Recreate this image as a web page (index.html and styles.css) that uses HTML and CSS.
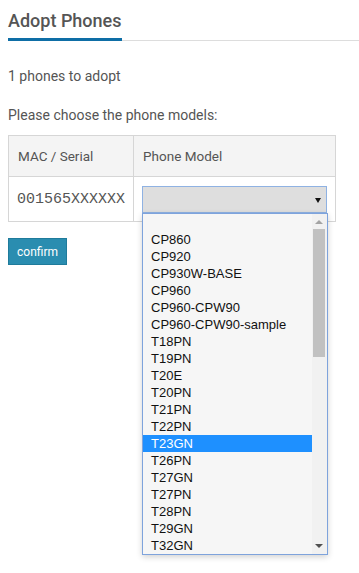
FILE: index.html
```html
<!DOCTYPE html>
<html lang="en">
<head>
    <meta charset="UTF-8">
    <meta name="viewport" content="width=device-width, initial-scale=1.0">
    <title>Adopt Phones</title>
    <link rel="stylesheet" href="styles.css">
</head>
<body>
    <div class="container">
        <h2 class="page-title"><span>Adopt Phones</span></h2>

        <p class="count">1 phones to adopt</p>
        <p class="hint">Please choose the phone models:</p>

        <table class="adopt-table">
            <thead>
                <tr>
                    <th class="col-mac">MAC / Serial</th>
                    <th>Phone Model</th>
                </tr>
            </thead>
            <tbody>
                <tr>
                    <td class="mac">001565XXXXXX</td>
                    <td>
                        <div class="select-wrap">
                            <div class="select-box"><span class="arrow"></span></div>

                            <div class="dropdown">
                                <ul class="options">
                                    <li>&nbsp;</li>
                                    <li>CP860</li>
                                    <li>CP920</li>
                                    <li>CP930W-BASE</li>
                                    <li>CP960</li>
                                    <li>CP960-CPW90</li>
                                    <li>CP960-CPW90-sample</li>
                                    <li>T18PN</li>
                                    <li>T19PN</li>
                                    <li>T20E</li>
                                    <li>T20PN</li>
                                    <li>T21PN</li>
                                    <li>T22PN</li>
                                    <li class="selected">T23GN</li>
                                    <li>T26PN</li>
                                    <li>T27GN</li>
                                    <li>T27PN</li>
                                    <li>T28PN</li>
                                    <li>T29GN</li>
                                    <li>T32GN</li>
                                </ul>
                                <div class="scrollbar">
                                    <span class="scroll-up"></span>
                                    <span class="thumb"></span>
                                    <span class="scroll-down"></span>
                                </div>
                            </div>
                        </div>
                    </td>
                </tr>
            </tbody>
        </table>

        <button class="confirm">confirm</button>
    </div>
</body>
</html>
```

FILE: styles.css
```css
html, body {
    min-height: 100vh;
}
body {
    margin: 0;
    font-family: Roboto, 'Liberation Sans', sans-serif;
    color: #555;
    background: #fff;
}
.container {
    padding: 0 0 0 8px;
    min-height: 573px;
}
.page-title {
    display: flex;
    margin: 0;
    padding-top: 8px;
    border-bottom: 1px solid #ddd;
    font-size: 18px;
    font-weight: 500;
}
.page-title span {
    display: inline-block;
    line-height: 26px;
    padding-bottom: 4px;
    border-bottom: 3px solid #0e6ea6;
    margin-bottom: -1px;
}
.count {
    margin: 26px 0 0;
    font-size: 14px;
    line-height: 19px;
}
.hint {
    margin: 20px 0 0;
    font-size: 14px;
    line-height: 19px;
}
.adopt-table {
    margin-top: 10px;
    width: 328px;
    border-collapse: collapse;
    font-size: 13.5px;
}
.adopt-table th,
.adopt-table td {
    border: 1px solid #d6d6d6;
    padding: 0 8px 0 9px;
    text-align: left;
}
.adopt-table th {
    height: 40px;
    font-weight: 400;
    background: #f4f4f4;
}
.adopt-table td {
    height: 44px;
    padding-left: 8px;
}
.col-mac {
    width: 107px;
}
.mac {
    font-family: 'Liberation Mono', monospace;
    font-size: 15px;
    color: #555;
}
.select-wrap {
    position: relative;
}
.select-box {
    height: 25px;
    border: 1px solid #8fb2e3;
    background: #dedede;
    position: relative;
}
.arrow {
    position: absolute;
    right: 5px;
    top: 11px;
    border-left: 3px solid transparent;
    border-right: 3px solid transparent;
    border-top: 5px solid #111;
}
.dropdown {
    position: absolute;
    left: 0;
    top: 27px;
    width: 184px;
    height: 340px;
    border: 1px solid #7ea3dc;
    background: #f6f6f6;
    box-shadow: 0 2px 6px rgba(0, 0, 0, 0.18);
    display: flex;
    z-index: 2;
    overflow: hidden;
}
.options {
    list-style: none;
    margin: 0;
    padding: 0;
    flex: 1;
    font-family: 'Liberation Sans', Arial, sans-serif;
    font-size: 13px;
    color: #111;
}
.options li {
    height: 17px;
    line-height: 17px;
    padding-left: 8px;
    white-space: nowrap;
}
.options li.selected {
    background: #1e90ff;
    color: #fff;
}
.scrollbar {
    width: 15px;
    background: #f1f1f1;
    position: relative;
}
.scroll-up,
.scroll-down {
    position: absolute;
    left: 3px;
    border-left: 4px solid transparent;
    border-right: 4px solid transparent;
}
.scroll-up {
    top: 6px;
    border-bottom: 4px solid #a3a3a3;
}
.scroll-down {
    bottom: 6px;
    border-top: 4px solid #505050;
}
.thumb {
    position: absolute;
    left: 1px;
    right: 2px;
    top: 15px;
    height: 128px;
    background: #c1c1c1;
}
.confirm {
    display: block;
    margin-top: 16px;
    height: 27px;
    padding: 0 8px;
    background: #2a8db0;
    color: #fff;
    border: 1px solid #1f7b9b;
    font-family: Roboto, 'Liberation Sans', sans-serif;
    font-size: 12px;
    cursor: pointer;
}
```
